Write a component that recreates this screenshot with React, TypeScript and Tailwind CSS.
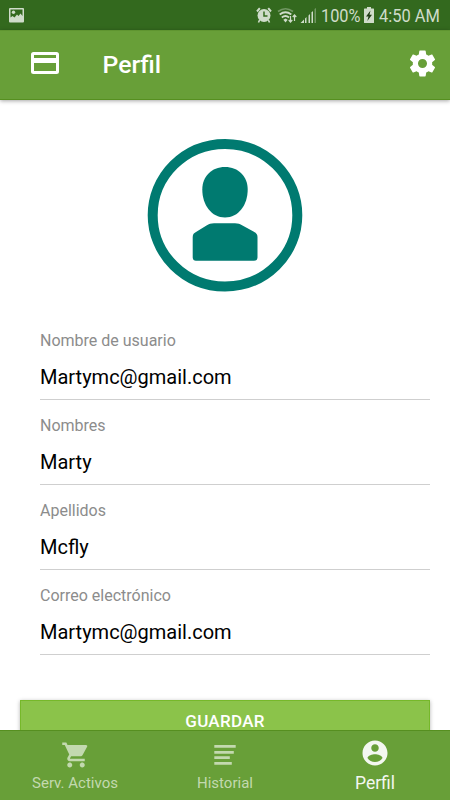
import React from "react";

function StatusBar() {
  return (
    <div className="flex h-[30px] items-center bg-[#33691e] pl-[9px] text-[#cfdcca]">
      <svg width="15" height="15" viewBox="0 0 15 15" className="mt-px shrink-0">
        <path
          fill="currentColor"
          fillRule="evenodd"
          d="M1 0h13a1 1 0 0 1 1 1v12.500a1 1 0 0 1-1 1H1a1 1 0 0 1-1-1V1a1 1 0 0 1 1-1zM1.500 1.500v8L3.500 8l2 1.500L8 6.500 9.500 8l2-2.500 2 2.500V1.500z"
        />
        <circle cx="4.500" cy="4.300" r="1.700" fill="currentColor" />
      </svg>
      <svg width="60" height="18" viewBox="0 0 60 18" className="ml-[232px] shrink-0">
        <g fill="currentColor">
          <circle cx="8" cy="9.500" r="6.500" />
          <path d="M1 5.500 3.800 2.200M12.200 2.200 15 5.500" stroke="currentColor" strokeWidth="2" />
          <path d="M3.600 14 2.500 16.500M12.400 14l1.100 2.500" stroke="currentColor" strokeWidth="1.600" />
        </g>
        <path d="M8 5.500v4.500h3.500" fill="none" stroke="#33691e" strokeWidth="1.500" />
        <g fill="none" stroke="currentColor">
          <path d="M22 5.500Q29.500 0 37 5.500" strokeWidth="1.700" opacity=".4" />
          <path d="M23.700 8.500q5.800-4.500 11.600 0M25.800 11.500q3.700-3 7.200 0" strokeWidth="1.800" />
          <path d="M34.500 10v6M32.700 14l1.800 2 1.800-2M38.500 15V9M36.700 11l1.800-2 1.800 2" strokeWidth="1.200" />
        </g>
        <path d="m27.300 13.800 2.200-1.200 2.200 1.200-2.200 2.700z" fill="currentColor" />
        <g fill="currentColor">
          <path d="M44.500 17l3.500-3.500V17zM49 12.500 50.500 11v6H49zM52.500 9.500 54 8v9h-1.500z" />
          <path d="M55.500 6.500 57 5v12h-1.500z" />
          <path d="M58.500 3 60 2v15h-1.500z" opacity=".4" />
        </g>
      </svg>
      <svg width="128" height="28" viewBox="0 -2 128 28" className="ml-[3px] shrink-0" fill="currentColor">
        <text x="2" y="19" fontFamily="Roboto, sans-serif" fontSize="18.700" textLength="39.500" lengthAdjust="spacingAndGlyphs">100%</text>
        <path d="M45.500 5.500H48V4h4v1.500h2.500a.5.5 0 0 1 .5.5v13.500a.5.5 0 0 1-.5.5h-9a.5.5 0 0 1-.5-.5V6a.5.5 0 0 1 .5-.5z" />
        <path d="m51.500 7.500-4.500 6h2.500l-1.200 4.500 4.700-6.200h-2.500z" fill="#1e3b14" />
        <text x="60" y="19" fontFamily="Roboto, sans-serif" fontSize="18.700" textLength="61" lengthAdjust="spacingAndGlyphs">4:50 AM</text>
      </svg>
    </div>
  );
}

function Header() {
  return (
    <header className="flex h-[70px] shrink-0 items-center border-y border-t-[#5f9530] border-b-[#568f20] bg-[#689f38] pr-[12px] pl-[31px] text-white shadow-[0_1px_4px_rgba(0,0,0,0.35)]">
      <svg width="28" height="22" viewBox="0 0 28 22" className="mt-[-4px] shrink-0">
        <path fill="currentColor" fillRule="evenodd" d="M2.500 0h23A2.500 2.500 0 0 1 28 2.500v17a2.500 2.500 0 0 1-2.500 2.500h-23A2.500 2.500 0 0 1 0 19.500v-17A2.500 2.500 0 0 1 2.500 0zM3 3v3h22V3zm0 8v8h22v-8z" />
      </svg>
      <h1 className="ml-[43.500px] text-[24.800px] leading-[30px] font-medium">Perfil</h1>
      <svg width="31" height="31" viewBox="0 0 24 24" className="mt-[-4px] ml-auto shrink-0">
        <path fill="currentColor" d="M19.430 12.980c.040-.320.070-.640.070-.980s-.030-.660-.070-.980l2.110-1.650c.190-.150.240-.420.120-.640l-2-3.460c-.120-.220-.390-.300-.610-.220l-2.490 1c-.520-.400-1.080-.730-1.690-.980l-.380-2.650A.488.488 0 0 0 14 2h-4c-.250 0-.460.180-.490.420l-.380 2.650c-.610.250-1.170.590-1.690.980l-2.490-1c-.230-.090-.490 0-.610.220l-2 3.460c-.130.220-.070.490.120.640l2.110 1.650c-.040.320-.070.650-.070.980s.030.660.070.980l-2.110 1.650c-.190.150-.240.420-.120.640l2 3.460c.120.220.390.300.610.220l2.490-1c.520.400 1.080.730 1.690.980l.380 2.650c.030.240.240.420.490.420h4c.250 0 .460-.180.490-.420l.380-2.650c.610-.250 1.170-.590 1.690-.980l2.490 1c.230.090.490 0 .610-.220l2-3.460c.120-.220.070-.490-.120-.640l-2.110-1.650zM12 15.500c-1.930 0-3.500-1.570-3.500-3.500s1.570-3.500 3.500-3.500 3.500 1.570 3.500 3.500-1.570 3.500-3.500 3.500z" />
      </svg>
    </header>
  );
}

function Avatar() {
  return (
    <svg width="156" height="154" viewBox="0 0 156 154" className="mx-auto mt-[38px] block shrink-0" fill="#007a70">
      <ellipse cx="78" cy="77.200" rx="72.300" ry="71.300" fill="none" stroke="#007a70" strokeWidth="10" />
      <path d="M78 29c13.500 0 22.700 9.500 22.700 22.500C100.700 67 91.500 79.500 78 79.500S55.300 67 55.300 51.500C55.300 38.500 64.500 29 78 29z" />
      <path d="M67 85.200h21c3 0 5 .800 7.500 2.200l10.500 5.800c3 1.600 4.500 2.800 4.500 5.800v20.500c0 2-1.300 3.300-3.300 3.300H49c-2 0-3.300-1.300-3.300-3.300V99c0-3 1.500-4.200 4.500-5.800l9.300-5.800c2.500-1.400 4.500-2.200 7.500-2.200z" />
    </svg>
  );
}

function Field({ label, value }: { label: string; value: string }) {
  return (
    <div className="h-[85px] border-b border-[#cfcfcf] pt-[15px]">
      <div className="h-[22px] text-[16px] leading-[22px] text-[#8c8c8c]">{label}</div>
      <div className="mt-[10px] text-[20px] leading-[30px] text-black">{value}</div>
    </div>
  );
}

function BottomNav() {
  return (
    <nav className="grid h-[70px] shrink-0 grid-cols-3 border-t border-[#568f20] bg-[#689f38] text-[#c3d9af]">
      <div className="flex flex-col items-center pt-[9px]">
        <svg width="30" height="30" viewBox="0 0 24 24" fill="currentColor" className="ml-[2px]">
          <path d="M7 18c-1.100 0-1.990.900-1.990 2S5.900 22 7 22s2-.900 2-2-.900-2-2-2zM1 2v2h2l3.600 7.590-1.350 2.450c-.160.280-.250.610-.250.960 0 1.100.900 2 2 2h12v-2H7.420c-.140 0-.250-.110-.250-.250l.030-.120.900-1.630h7.450c.750 0 1.410-.410 1.750-1.030l3.580-6.490A1.003 1.003 0 0 0 20 4H5.210l-.940-2H1zm16 16c-1.100 0-1.990.900-1.990 2s.890 2 1.990 2 2-.900 2-2-.900-2-2-2z" />
        </svg>
        <span className="mt-[3px] text-[15px] leading-5">Serv. Activos</span>
      </div>
      <div className="flex flex-col items-center pt-[9px]">
        <svg width="30" height="30" viewBox="0 0 30 30" fill="currentColor">
          <path d="M4.300 5h21.400v2.700H4.300zM4.300 11h19.500v2.700H4.300zM4.300 16.300h15.500V19H4.300zM4.300 22h17.500v2.700H4.300z" />
        </svg>
        <span className="mt-[3px] text-[15px] leading-5">Historial</span>
      </div>
      <div className="flex flex-col items-center pt-[7px] text-[#f3f7f0]">
        <svg width="30" height="30" viewBox="0 0 24 24" fill="currentColor">
          <path d="M12 2C6.480 2 2 6.480 2 12s4.480 10 10 10 10-4.480 10-10S17.520 2 12 2zm0 3c1.660 0 3 1.340 3 3s-1.340 3-3 3-3-1.340-3-3 1.340-3 3-3zm0 14.200c-2.500 0-4.710-1.280-6-3.220.030-1.990 4-3.080 6-3.080 1.990 0 5.970 1.090 6 3.080-1.290 1.940-3.500 3.220-6 3.220z" />
        </svg>
        <span className="mt-[5px] text-[17.500px] leading-5">Perfil</span>
      </div>
    </nav>
  );
}

export default function App() {
  return (
    <div className="flex h-[800px] w-[450px] flex-col overflow-hidden bg-white font-['Roboto',sans-serif]">
      <StatusBar />
      <Header />
      <main className="flex min-h-0 flex-1 flex-col overflow-hidden">
        <Avatar />
        <div className="mt-[23px] mr-[20px] ml-[40px] shrink-0">
          <Field label="Nombre de usuario" value="Martymc@gmail.com" />
          <Field label="Nombres" value="Marty" />
          <Field label="Apellidos" value="Mcfly" />
          <Field label="Correo electrónico" value="Martymc@gmail.com" />
        </div>
        <button className="mx-[20px] mt-[45px] h-[45px] shrink-0 border border-[#76b82a] bg-[#8bc34a] pb-[2px] text-[17px] leading-[41px] font-medium tracking-[0.3px] text-white shadow-[0_1px_4px_rgba(0,0,0,0.3)]">
          GUARDAR
        </button>
      </main>
      <BottomNav />
    </div>
  );
}
